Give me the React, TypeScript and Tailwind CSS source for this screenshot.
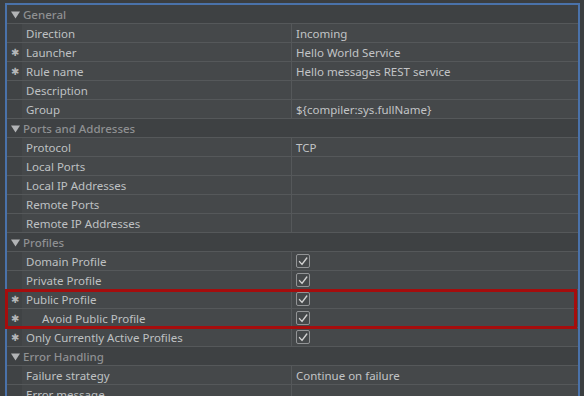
import React from 'react';

type Row =
  | { kind: 'header'; label: string }
  | { kind: 'prop'; label: string; value?: string; check?: boolean; req?: boolean; indent?: boolean };

const rows: Row[] = [
  { kind: 'header', label: 'General' },
  { kind: 'prop', label: 'Direction', value: 'Incoming' },
  { kind: 'prop', label: 'Launcher', value: 'Hello World Service', req: true },
  { kind: 'prop', label: 'Rule name', value: 'Hello messages REST service', req: true },
  { kind: 'prop', label: 'Description' },
  { kind: 'prop', label: 'Group', value: '${compiler:sys.fullName}' },
  { kind: 'header', label: 'Ports and Addresses' },
  { kind: 'prop', label: 'Protocol', value: 'TCP' },
  { kind: 'prop', label: 'Local Ports' },
  { kind: 'prop', label: 'Local IP Addresses' },
  { kind: 'prop', label: 'Remote Ports' },
  { kind: 'prop', label: 'Remote IP Addresses' },
  { kind: 'header', label: 'Profiles' },
  { kind: 'prop', label: 'Domain Profile', check: true },
  { kind: 'prop', label: 'Private Profile', check: true },
];

const highlighted: Row[] = [
  { kind: 'prop', label: 'Public Profile', check: true, req: true },
  { kind: 'prop', label: 'Avoid Public Profile', check: true, req: true, indent: true },
];

const tail: Row[] = [
  { kind: 'prop', label: 'Only Currently Active Profiles', check: true, req: true },
  { kind: 'header', label: 'Error Handling' },
  { kind: 'prop', label: 'Failure strategy', value: 'Continue on failure' },
  { kind: 'prop', label: 'Error message' },
];

function CheckBox() {
  return (
    <span className="flex h-[14px] w-[14px] items-center justify-center rounded-[2px] border border-[#929496]">
      <svg width="10" height="9" viewBox="0 0 10 9" fill="none">
        <path d="M1.5 4.6 L4 7.4 L8.8 1" stroke="#d2d2d2" strokeWidth="1.4" strokeLinecap="round" strokeLinejoin="round" />
      </svg>
    </span>
  );
}

function Line({ row }: { row: Row }) {
  if (row.kind === 'header') {
    return (
      <div className="flex h-[19px] items-center border-b border-[#55585a] bg-[#3e4143] pt-[2px] text-[#8e9092]">
        <span className="flex w-[16px] justify-center pl-[1px]">
          <svg width="9" height="8" viewBox="0 0 9 8">
            <polygon points="0,0.5 9,0.5 4.5,7.5" fill="#b2b4b6" />
          </svg>
        </span>
        <span className="font-medium">{row.label}</span>
      </div>
    );
  }
  return (
    <div className="flex h-[19px] items-center border-b border-[#55585a] bg-[#45484a]">
      <span className="flex h-full w-[15px] items-center justify-center bg-[#404345] pt-[1px] text-[10px] text-[#b4b6b8]">
        {row.req ? '✱' : ''}
      </span>
      <span
        className={`flex h-full w-[270px] items-center border-r border-[#55585a] pt-[2px] text-[#bfc1c3] ${
          row.indent ? 'pl-[20px]' : 'pl-[4px]'
        }`}
      >
        {row.label}
      </span>
      <span className="flex h-full flex-1 items-center pl-[4px] text-[#c2c4c6]">
        {row.check ? <CheckBox /> : <span className="pt-[2px]">{row.value}</span>}
      </span>
    </div>
  );
}

export default function App() {
  return (
    <div
      className="h-[396px] w-[584px] overflow-hidden bg-[#3b3e40] pl-[5px] pr-[4px] pt-[3px] text-[11.5px]"
      style={{ fontFamily: '"Noto Sans", "Open Sans", sans-serif' }}
    >
      <div className="border-l-2 border-r-2 border-t-2 border-[#4a72aa] bg-[#3e4143]">
        {rows.map((r, i) => (
          <Line key={i} row={r} />
        ))}
        <div className="relative">
          {highlighted.map((r, i) => (
            <Line key={i} row={r} />
          ))}
          <div className="absolute -left-[2px] right-[1px] -top-[1px] bottom-[-1px] border-[3px] border-[#a50d0d]" />
        </div>
        {tail.map((r, i) => (
          <Line key={i} row={r} />
        ))}
      </div>
    </div>
  );
}
